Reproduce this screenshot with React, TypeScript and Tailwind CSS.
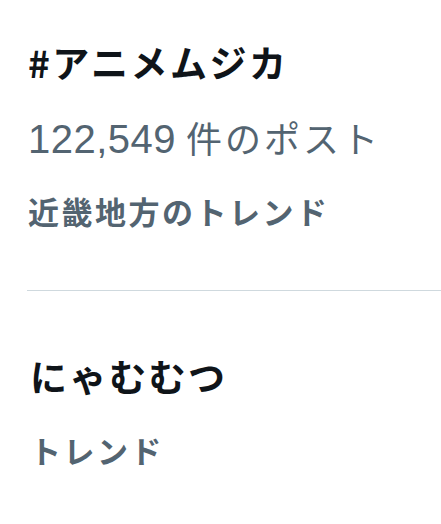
const font = { fontFamily: '"Noto Sans CJK JP", "Noto Sans", sans-serif' };
const numFont = { fontFamily: '"Liberation Sans", sans-serif' };

interface Trend {
    id: string;
    title: string;
    count?: string;
    context: string;
}

const trends: Trend[] = [
    { id: '1', title: '#アニメムジカ', count: '122,549', context: '近畿地方のトレンド' },
    { id: '2', title: 'にゃむむつ', context: 'トレンド' },
];

export default function App() {
    return (
        <div className="w-[441px] h-[524px] bg-white overflow-hidden" style={font}>
            {trends.map((trend, i) => (
                <div key={trend.id}>
                    {i > 0 && <div className="ml-[27px] h-px bg-[#cfd9de]" />}
                    <div className={i === 0 ? 'pl-[28px] pt-[25px] pb-[44px]' : 'pl-[30px] pt-[48px]'}>
                        <div className="text-[37px] leading-[75px] font-bold text-[#0f1419] tracking-[2.5px]">{trend.title}</div>
                        {trend.count && (
                            <div className="flex items-baseline h-[75px] leading-[75px] text-[#536471]">
                                <span className="text-[40px] tracking-[0.5px]" style={numFont}>{trend.count}</span>
                                <span className="ml-[10px] text-[36px] tracking-[3px]">件のポスト</span>
                            </div>
                        )}
                        <div className="text-[31px] leading-[71px] font-bold text-[#536471] tracking-[2.5px]">{trend.context}</div>
                    </div>
                </div>
            ))}
        </div>
    );
}
